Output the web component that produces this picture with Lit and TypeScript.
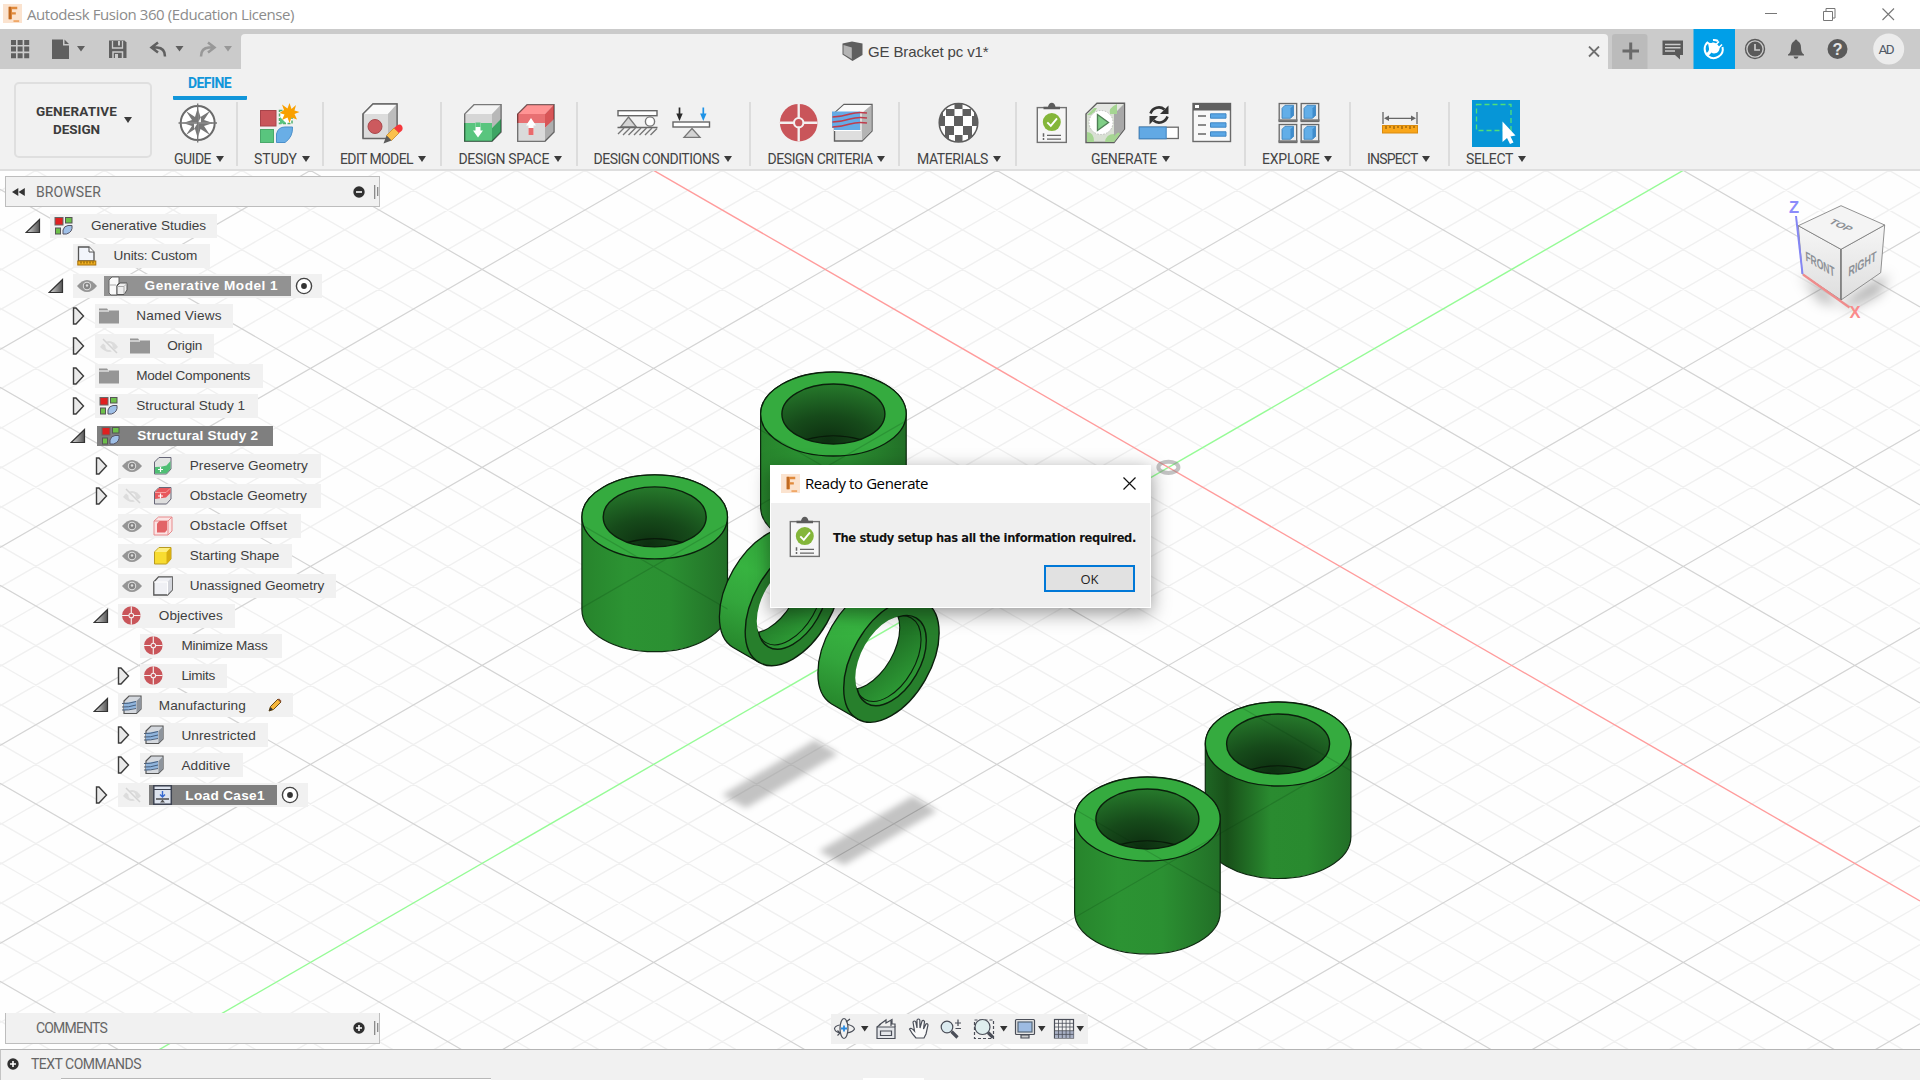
import { LitElement, html, svg, css, nothing } from "lit";
import { customElement, property, query } from "lit/decorators.js";

/* Text set to a fixed measure by tracking, so labels keep their column width. */
@customElement("fit-text")
class FitText extends LitElement {
  static styles = css`
    :host { display: inline-block; white-space: nowrap; flex: none; }
  `;
  @property() text = "";
  @property({ type: Number }) w = 0;
  @query(".t") span!: HTMLElement;
  updated() {
    const s = this.span;
    s.style.letterSpacing = "0px";
    const natural = s.getBoundingClientRect().width;
    s.style.letterSpacing = (this.w - natural) / this.text.length + "px";
    this.style.width = this.w + "px";
  }
  render() {
    return html`<span class="t">${this.text}</span>`;
  }
}

const fit = (text: string, w: number, cls = "") =>
  html`<fit-text class=${cls} .text=${text} .w=${w}></fit-text>`;

/* An svg whose user units are window pixels, starting at x, y. */
const S = (x: number, y: number, w: number, h: number, c: unknown) =>
  html`<svg width=${w} height=${h} viewBox="${x} ${y} ${w} ${h}">${c}</svg>`;

const tri = (fill = "#3c3c3c", w = 8) =>
  html`<svg class="caret" width=${w} height="6" viewBox="0 0 8 6"><path d="M0 0H8L4 6Z" fill=${fill} /></svg>`;

const logo = html`<svg width="19" height="19" viewBox="0 0 20 20">
  <rect width="20" height="20" fill="#fbe3cf" />
  <path d="M6 3H15V5.500H9.500V8.600H13.500V11H9.500V16H6Z" fill="#e08a3c" />
  <path d="M6 3H8.500V16H6Z" fill="#c06a22" /><path d="M11 17H17V19H11Z" fill="#f0a868" />
</svg>`;

/* ---------- ribbon icons ---------- */
const compass = S(177, 102, 42, 42, svg`
  <circle cx="197.7" cy="123" r="17" fill="#fff" stroke="#6a6a6a" stroke-width="2"/>
  <path d="M186 111L195 117L197.7 108L200.5 117L210 111L204 120L213 123L204 126L210 135L200.5 129L197.7 138L195 129L186 135L192 126L183 123L192 120Z" fill="#777"/>
  <path d="M197.7 110V136M184 123H211" stroke="#fff" stroke-width="1"/>
  <path d="M197.7 123L201 117V123ZM197.7 123L194 129V123Z" fill="#f4f4f4"/>
  <path d="M197.7 103.500V142.500M178.500 123H217" stroke="#777" stroke-width="1.400"/>`);
const study = S(259, 102, 42, 42, svg`
  <rect x="260.500" y="110.500" width="15.500" height="15.500" fill="#c9555a" stroke="#a8444a"/>
  <rect x="279.500" y="110.500" width="12.500" height="13" fill="#fff" stroke="#4fae6c" stroke-width="1.500" stroke-dasharray="3 1.500"/>
  <path d="M280 124V117L286 123Z" fill="#59c57e"/>
  <rect x="260.500" y="129.500" width="13" height="13" fill="#59c57e" stroke="#49a86a"/>
  <path d="M276.500 142.500V134Q278 127 285 127H292.500Q293 137 285 142.500Z" fill="#69aee6" stroke="#4b8fca"/>
  <path d="M289.500 103L291.500 109L296 105L294.500 110.500L299.500 112L294.500 114L297 119.500L291.500 117.500L289.500 123L287.500 117.500L282 120L284.500 114.500L279.500 113L284 110L282 104.500L287.500 108.500Z" fill="#f9a000" />`);
const editModel = S(361, 101, 43, 43, svg`
  <path d="M363 113L373 103H397V127L387 137.500H363Z" fill="#dcdcdc" stroke="#686868" stroke-width="1.300"/>
  <path d="M363 113L373 103H397L388 113Z" fill="#fafafa"/><path d="M388 113L397 103V127L388 137Z" fill="#bdbdbd"/>
  <path d="M363 137.500V113L373 103H397V127" fill="none" stroke="#686868" stroke-width="1.300"/>
  <circle cx="375" cy="125.500" r="7" fill="#cc5a5e" stroke="#a8484c"/>
  <path d="M386.500 134.500L394 127L399 132L391.500 139.500Z" fill="#fbc04c" stroke="#c98a28" stroke-width=".8"/>
  <path d="M386.500 134.500L383.500 142.500L391.500 139.500Z" fill="#5a5a5a"/>
  <path d="M394 127L397 124.500Q400 122.500 402 125Q403.500 128 401.500 130L399 132Z" fill="#f5383c"/>`);
const spaceIcon = (x: number, top: string, topHi: string, side: string, bot: string, botSide: string, up: boolean) =>
  S(x - 1, 103, 41, 41, svg`
  <path d="M${x} 114V123.500H${x + 28}V114Z" fill=${top}/><path d="M${x} 126V141.500H${x + 28}V123H${x}Z" fill=${bot}/>
  <path d="M${x} 114L${x + 10} 104.500H${x + 37}L${x + 28} 114Z" fill=${topHi}/>
  <path d="M${x + 28} 114L${x + 37} 104.500V120L${x + 28} 128Z" fill=${side}/>
  <path d="M${x + 28} 128L${x + 37} 119V132L${x + 28} 141.500Z" fill=${botSide}/>
  <path d="M${x + .7} 141.300V114L${x + 10} 104.700H${x + 37.200}V132L${x + 28} 141.300Z" fill="none" stroke="#00000080" stroke-width="1.300"/>
  ${up
    ? svg`<path d="M${x + 14} 118L${x + 19} 125.500H${x + 16.500}V135H${x + 11.500}V125.500H${x + 9}Z" fill="#fff"/><path d="M${x + 11.500} 128H${x + 16.500}V135H${x + 11.500}Z" fill="#e96a6c"/>`
    : svg`<path d="M${x + 14} 137.500L${x + 9} 130.500H${x + 11.500}V123H${x + 16.500}V130.500H${x + 19}Z" fill="#fff"/><path d="M${x + 11.500} 122.500H${x + 16.500}V127H${x + 11.500}Z" fill="#59c57e"/>`}`);
const support = S(616, 103, 43, 40, svg`
  <rect x="618" y="110.700" width="39" height="5" fill="#fff" stroke="#666" stroke-width="1.400"/>
  <path d="M628.500 117L636.500 127H620.500Z" fill="#d4d4d4" stroke="#777" stroke-width="1.300"/>
  <circle cx="650" cy="121.500" r="4.600" fill="#fff" stroke="#777" stroke-width="1.400"/>
  <path d="M617.500 127.500H657.500" stroke="#666" stroke-width="1.300"/>
  <path d="M618 134L624 128M623 135L630 128M628.500 135L635.500 128M634 135L641 128M639.500 135L646.500 128M645 135L652 128M650.500 135L657 128.500" stroke="#777" stroke-width="1.400"/>`);
const load = S(671, 103, 40, 40, svg`
  <rect x="673" y="122" width="36.500" height="5" fill="#fff" stroke="#666" stroke-width="1.400"/>
  <path d="M692 128.500L700 137.300H684Z" fill="#d4d4d4" stroke="#777" stroke-width="1.300"/>
  <path d="M679.500 107.500V115" stroke="#2a2a2a" stroke-width="1.700"/><path d="M676.300 113.500H682.700L679.500 121Z" fill="#2a2a2a"/>
  <path d="M703.300 107.500V115" stroke="#1f93e6" stroke-width="1.700"/><path d="M700.100 113.500H706.500L703.300 121Z" fill="#1f93e6"/>`);
const target = (cx: number, cy: number, r: number) => svg`
  <circle cx=${cx} cy=${cy} r=${r} fill="#c9555a"/>
  <path d="M${cx} ${cy - r}V${cy + r}M${cx - r} ${cy}H${cx + r}" stroke="#f4f0f0" stroke-width=${r / 8}/>
  <circle cx=${cx} cy=${cy} r=${r * .25} fill="#c9555a" stroke="#f4f0f0" stroke-width=${r / 9}/>`;
const criteria = S(779, 103, 40, 41, target(798.7, 122.7, 18.8));
const layers = S(832, 103, 42, 41, svg`
  <path d="M834.500 113L844 104.500H872V131L862 141H834.500Z" fill="#dedede" stroke="#606060" stroke-width="1.400"/>
  <path d="M835 113L844 105H871.500L862 113Z" fill="#fafafa"/><path d="M862 113L871.500 105V131L862 140.500Z" fill="#b4b4b4"/>
  <path d="M832 111.500H860V130.500H834V128H832Z" fill="#65abe6"/><path d="M834 130.500H861" stroke="#fff"/>
  <path d="M832.500 117Q842 116.500 850 114T867 113M832.500 122Q842 121.500 850 119T867 118M832.500 127Q842 126.500 850 124T867 123" fill="none" stroke="#c03c4c" stroke-width="1.400"/>`);
const sphere = S(938, 102, 41, 42, svg`
  <clipPath id="sph"><circle cx="958.500" cy="122.800" r="19.300"/></clipPath>
  <circle cx="958.500" cy="122.800" r="19.300" fill="#fff" stroke="#5c5c5c" stroke-width="1.500"/>
  <g clip-path="url(#sph)" fill="#5f5f5f">
    <path d="M954.500 102H962.500V109H954.500ZM946 109H954.500V116H946ZM962.500 109H971V116H962.500ZM939 116H945V126H939ZM954 116H963V126H954ZM972 116H978V126H972ZM945 126H954V135H945ZM963 126H972V135H963ZM955 135H962.500V143H955ZM940 109H943V116H940ZM974 109H977V116H974ZM944 135H949V143H944ZM968 135H973V143H968Z"/>
  </g>`);
const clip = (x: number, y: number) => svg`
  <g transform="translate(${x} ${y})">
    <rect x=".8" y="4.800" width="29" height="34.800" fill="#f6f6f6" stroke="#727272" stroke-width="1.400"/>
    <path d="M7 6.500V4H11.500Q12.500 0 15.300 0T19 4H23.500V6.500Z" fill="#5c5c5c"/>
    <circle cx="15.300" cy="19.300" r="9" fill="#84b63a"/>
    <path d="M10.800 19.500L14.300 23L20.500 15.500" fill="none" stroke="#fff" stroke-width="1.900"/>
    <path d="M10.500 32.500H24.500M10.500 36.300H24.500" stroke="#666" stroke-width="1.300"/>
    <path d="M7 30.500V34M7 35.300V37.300" stroke="#666" stroke-width="1.500"/>
  </g>`;
const genCube = S(1080, 102, 46, 42, svg`
  <path d="M1086 114L1097 103.300H1124.500V129L1114 142.500H1086Z" fill="#d9e0d4" stroke="#5f5f5f" stroke-width="1.400"/>
  <path d="M1114 114L1124 104V129L1114 142Z" fill="#a8a8a8"/><path d="M1087 114L1097.500 104H1123L1114 114Z" fill="#e4e6e2"/>
  <path d="M1087 132Q1094 132 1094 142H1087ZM1114 134Q1106 134 1105 142H1114ZM1087 115Q1093 116 1097 108L1094 108ZM1117 104Q1108 108 1110 114H1117ZM1114 136Q1119 130 1120 134L1114 142Z" fill="#a5d592"/>
  <circle cx="1101" cy="122.500" r="12" fill="#fff" stroke="#bbb" stroke-dasharray="1.500 1.500"/>
  <path d="M1097.500 114.500V130.500L1108.500 122.500Z" fill="#7fcf86" stroke="#4f7f55" stroke-width="1.400"/>`);
const sync = S(1138, 103, 42, 40, svg`
  <path d="M1150.500 113.500A8.800 8.800 0 0 1 1164.500 109.500" fill="none" stroke="#333" stroke-width="2.600"/><path d="M1168.500 105.500V114H1160Z" fill="#333"/>
  <path d="M1167.500 116.500A8.800 8.800 0 0 1 1153.500 120.500" fill="none" stroke="#333" stroke-width="2.600"/><path d="M1149.500 124.500V116H1158Z" fill="#333"/>
  <rect x="1139.500" y="127.200" width="38.800" height="11.300" fill="#fff" stroke="#6a6a6a" stroke-width="1.300"/>
  <rect x="1139.200" y="127" width="27" height="11.800" fill="#62a9e4" stroke="#3e83c0"/>`);
const list = S(1192, 102, 40, 42, svg`
  <rect x="1193" y="103.500" width="37.500" height="38" fill="#f8f8f8" stroke="#6a6a6a" stroke-width="1.400"/>
  <rect x="1193" y="103" width="38" height="7.500" fill="#606060"/><rect x="1195" y="105" width="4" height="3" fill="#fff"/>
  <path d="M1198 116H1206M1198 125H1206M1198 134H1206" stroke="#666" stroke-width="1.500"/>
  <path d="M1210.500 113.800H1226V118.200H1210.500ZM1210.500 122.800H1226V127.200H1210.500ZM1210.500 131.800H1226V136.200H1210.500Z" fill="#5aa7e6" stroke="#4187c4"/>`);
const quad = (x: number, y: number) => svg`<g transform="translate(${x} ${y})">
  <rect x=".7" y=".7" width="17.500" height="18" fill="#ececec" stroke="#686868" stroke-width="1.300"/><path d="M0 17.500H19" stroke="#777" stroke-width="2"/>
  <path d="M3.500 5.500L6.500 2.500H15V12.500L12 15.500H3.500Z" fill="#62aee8" stroke="#3b7fb8" stroke-width=".8"/><path d="M12 5.500L15 2.500V12.500L12 15.500Z" fill="#3f8ccc"/></g>`;
const explore = S(1278, 102, 42, 42, svg`${quad(1278.5, 102.8)}${quad(1300.5, 102.8)}${quad(1278.5, 123.8)}${quad(1300.5, 123.8)}`);
const ruler = S(1381, 103, 38, 40, svg`
  <path d="M1383 112V124M1417 112V124M1386 118.300H1414" stroke="#666" stroke-width="1.300"/>
  <path d="M1384 118.300L1389 115.500V121ZM1416 118.300L1411 115.500V121Z" fill="#666"/>
  <rect x="1382.500" y="125.500" width="35" height="7.500" fill="#f9a61a" stroke="#d98b10"/>
  <path d="M1386 126V129M1390 126V128M1394 126V129M1398 126V128M1402 126V129M1406 126V128M1410 126V129M1414 126V128" stroke="#7a4d05"/>`);
const select = S(1472, 99, 48, 47, svg`
  <rect x="1472" y="99" width="48" height="47" fill="#0696d7"/>
  <path d="M1476.500 103.500H1511V129.500H1476.500Z" fill="none" stroke="#4fe07a" stroke-width="1.300" stroke-dasharray="5 3"/>
  <path d="M1502.500 120.500V141L1507 137L1510 143L1513.500 141.500L1510.500 135.500L1515.500 134.500Z" fill="#fff"/>`);

/* x0/x1: separator-to-separator span; lx/lw: label start and measure; ix: icon row start */
interface Group { x0: number; x1: number; label: string; lx: number; lw: number; ix: number; gap: number; icons: unknown[] }
const groups: Group[] = [
  { x0: 160, x1: 237, label: "GUIDE", lx: 174, lw: 37, ix: 177, gap: 0, icons: [compass] },
  { x0: 237, x1: 323, label: "STUDY", lx: 254, lw: 43, ix: 259, gap: 0, icons: [study] },
  { x0: 323, x1: 441, label: "EDIT MODEL", lx: 340, lw: 73, ix: 361, gap: 0, icons: [editModel] },
  { x0: 441, x1: 577, label: "DESIGN SPACE", lx: 458.5, lw: 90.5, ix: 463, gap: 12, icons: [
    spaceIcon(464, "#d6d6d6", "#f4f4f4", "#b8b8b8", "#59c57e", "#3ea564", false),
    spaceIcon(517, "#e87072", "#ff9494", "#d85557", "#dadada", "#aeaeae", true)] },
  { x0: 577, x1: 750, label: "DESIGN CONDITIONS", lx: 593.5, lw: 125.5, ix: 616, gap: 12, icons: [support, load] },
  { x0: 750, x1: 899, label: "DESIGN CRITERIA", lx: 767.5, lw: 105, ix: 779, gap: 13, icons: [criteria, layers] },
  { x0: 899, x1: 1016, label: "MATERIALS", lx: 917, lw: 71, ix: 938, gap: 0, icons: [sphere] },
  { x0: 1016, x1: 1245, label: "GENERATE", lx: 1091, lw: 66, ix: 1036, gap: 12, icons: [S(1036, 102, 32, 42, clip(1036.5, 102.8)), genCube, sync, list] },
  { x0: 1245, x1: 1350, label: "EXPLORE", lx: 1262, lw: 57.5, ix: 1278, gap: 0, icons: [explore] },
  { x0: 1350, x1: 1449, label: "INSPECT", lx: 1367, lw: 50.5, ix: 1381, gap: 0, icons: [ruler] },
  { x0: 1449, x1: 1549, label: "SELECT", lx: 1466, lw: 47, ix: 1472, gap: 0, icons: [select] },
];

/* ---------- tree icons, 20 x 20 ---------- */
const ic = (c: unknown) => html`<svg width="20" height="20" viewBox="0 0 20 20">${c}</svg>`;
const T: Record<string, unknown> = {
  study: ic(svg`<rect x="1" y="1.500" width="8" height="7.500" fill="#e02020" stroke="#666"/><rect x="11.500" y="1.500" width="6.500" height="5.500" fill="#6cc04a" stroke="#555"/>
    <rect x="1.500" y="12" width="5" height="6" fill="#6cc04a" stroke="#555"/><path d="M9 18V14Q10 10 14 9.500H18Q19 16 12.500 18Z" fill="#9fc0e8" stroke="#556"/>`),
  units: ic(svg`<path d="M1.500 15V1H12L17 6V15Z" fill="#f2f5fb" stroke="#555" stroke-width="1.300"/><path d="M12 1V6H17" fill="#fff" stroke="#555"/><rect x=".8" y="15" width="18" height="4" fill="#f0b020" stroke="#a87008"/><path d="M4 15.500V17.500M7 15.500V17.500M10 15.500V17.500M13 15.500V17.500M16 15.500V17.500" stroke="#7a5000"/>`),
  model: ic(svg`<path d="M1 4L4 1H11V7L9 9V19H3L1 17Z" fill="#fafafa" stroke="#666"/><path d="M9 10L12 7H19V14L16 18.500H9Z" fill="#eee" stroke="#555"/><path d="M1 9H8M9 10.500H16V18M16 10.500L19 7.500" fill="none" stroke="#aaa"/>`),
  folder: ic(svg`<path d="M0 2.500H8L9.500 4.500H20V17.500H0Z" fill="#969696"/><path d="M0 5H10" stroke="#f1f1f1" stroke-width="1.200"/>`),
  eye: ic(svg`<path d="M0 10Q5 4 10 4T20 10Q15 16 10 16T0 10Z" fill="#959595"/><circle cx="10" cy="10" r="4.200" fill="#e0e0e0"/><circle cx="10" cy="10" r="3.200" fill="#858585"/><circle cx="10" cy="9.500" r="1.200" fill="#ddd"/>`),
  eyeoff: ic(svg`<path d="M1 11Q5 5 10 5T19 11Q14 16 10 16T1 11Z" fill="#dcdcdc"/><circle cx="10" cy="10.500" r="3.500" fill="#f1f1f1"/><path d="M2 3L18 18" stroke="#f1f1f1" stroke-width="3.500"/><path d="M4 3L18 17" stroke="#d4d4d4" stroke-width="1.500"/>`),
  preserve: ic(svg`<path d="M1.500 6L6 1.500H18V13L13.500 18H1.500Z" fill="#e2e4e2" stroke="#667"/><path d="M2 11Q8 11 13.500 9.500L17.500 5V13L13.300 17.500H2Z" fill="#4fbf74"/><path d="M7.500 11V16M5 13.500H10" stroke="#fff" stroke-width="1.200"/>`),
  obstacle: ic(svg`<path d="M1.500 6L6 1.500H18V13L13.500 18H1.500Z" fill="#dedede" stroke="#667"/><path d="M2 6L6 2H17.500V7L13 11.500L2 13Z" fill="#e8585c"/><path d="M2 6.500H13L17 2.500" fill="none" stroke="#f8a0a0"/><path d="M7.500 7.500V12.500M5 10H10" stroke="#fff" stroke-width="1.200"/>`),
  offset: ic(svg`<path d="M1 5L5.500 1H19V15L15 19H1Z" fill="#fbe4e4" stroke="#e88a8c"/><path d="M1 5H15V19M15 5L19 1" fill="none" stroke="#e88a8c"/><path d="M4 7.500L6.500 5H14V14L12 16.500H4Z" fill="#e26366"/>`),
  start: ic(svg`<path d="M1.500 6L6 1.500H18V13L13.500 18H1.500Z" fill="#f8dc30" stroke="#b89a20"/><path d="M13.500 6L18 1.500V13L13.500 18Z" fill="#d8ae10"/><path d="M2 6L6 2H17L13.500 6Z" fill="#fdee80"/>`),
  unassigned: ic(svg`<path d="M.8 6L5.500 .8H19.200V14L14.500 19H.8Z" fill="#eff0f4" stroke="#555" stroke-width="1.300"/><path d="M14.500 6L19 1V14L14.500 18.500Z" fill="#d4d6dc"/><path d="M1 6H14.500V18.500" fill="none" stroke="#fff"/>`),
  target: ic(target(9.3, 9.5, 9.3)),
  manu: ic(svg`<path d="M2 6L7 1H19V14L14.500 18.500H2Z" fill="#d4d8de" stroke="#555" stroke-width="1.200"/><path d="M14.500 6L19 1.500V14L14.500 18Z" fill="#8e949c"/><path d="M2 8L14 6V13L2 15.500Z" fill="#8fb4dc"/><path d="M0 8.500Q6 9 14 6.500M0 12Q6 12.500 14 10M0 15Q6 15.500 14 13.500" fill="none" stroke="#3d5370" stroke-width=".9"/>`),
  loadcase: ic(svg`<rect x=".8" y=".8" width="17.500" height="18.400" fill="#dde3ee" stroke="#3c4250" stroke-width="1.500"/><path d="M1 4.500H18" stroke="#3c4250"/><path d="M9.500 6V12M7 9.500L9.500 12L12 9.500" fill="none" stroke="#3468d0" stroke-width="1.400"/><path d="M3 14H16" stroke="#333" stroke-width="1.300"/><path d="M9.500 14.500L12 17.500H7Z" fill="#555"/>`),
};
const radio = html`<svg class="radio" width="18" height="18" viewBox="0 0 18 18"><circle cx="9" cy="9" r="7.600" fill="#fff" stroke="#444" stroke-width="1.400"/><circle cx="9" cy="9" r="2.900" fill="#333"/></svg>`;
const pencil = html`<svg class="pencil" width="14" height="14" viewBox="0 0 14 14"><path d="M1 13L2.500 8.500L10 1L13 4L5.500 11.500Z" fill="#f6b73c" stroke="#6b4a12"/><path d="M1 13L2.500 9L5 11.500Z" fill="#333"/><path d="M9.500 1.500L11 .5L13.500 3L12.500 4.500Z" fill="#8a5030"/></svg>`;

interface Row { lv: number; t?: "open" | "closed"; eye?: "eye" | "eyeoff"; icon: string; text: string; w: number; pad?: number; dark?: "mid" | "deep"; radio?: boolean; pencil?: boolean; bare?: boolean }
const rows: Row[] = [
  { lv: 0, t: "open", icon: "study", text: "Generative Studies", w: 115, pad: 11 },
  { lv: 1, icon: "units", text: "Units: Custom", w: 83.5 },
  { lv: 1, t: "open", eye: "eye", icon: "model", text: "Generative Model 1", w: 133.5, dark: "mid", radio: true, pad: 13 },
  { lv: 2, t: "closed", icon: "folder", text: "Named Views", w: 85.5, pad: 11 },
  { lv: 2, t: "closed", eye: "eyeoff", icon: "folder", text: "Origin", w: 35, pad: 11.5 },
  { lv: 2, t: "closed", icon: "folder", text: "Model Components", w: 114 },
  { lv: 2, t: "closed", icon: "study", text: "Structural Study 1", w: 109, pad: 12.5 },
  { lv: 2, t: "open", icon: "study", text: "Structural Study 2", w: 121, dark: "deep", bare: true, pad: 14.5 },
  { lv: 3, t: "closed", eye: "eye", icon: "preserve", text: "Preserve Geometry", w: 118, pad: 13.5 },
  { lv: 3, t: "closed", eye: "eyeoff", icon: "obstacle", text: "Obstacle Geometry", w: 117, pad: 14.5 },
  { lv: 3, eye: "eye", icon: "offset", text: "Obstacle Offset", w: 97.5, pad: 14 },
  { lv: 3, eye: "eye", icon: "start", text: "Starting Shape", w: 89.5 },
  { lv: 3, eye: "eye", icon: "unassigned", text: "Unassigned Geometry", w: 134.5, pad: 12 },
  { lv: 3, t: "open", icon: "target", text: "Objectives", w: 64 },
  { lv: 4, icon: "target", text: "Minimize Mass", w: 86, pad: 15 },
  { lv: 4, t: "closed", icon: "target", text: "Limits", w: 33.5 },
  { lv: 3, t: "open", icon: "manu", text: "Manufacturing", w: 87, pencil: true, pad: 11 },
  { lv: 4, t: "closed", icon: "manu", text: "Unrestricted", w: 74.5, pad: 12 },
  { lv: 4, t: "closed", icon: "manu", text: "Additive", w: 49 },
  { lv: 3, t: "closed", eye: "eyeoff", icon: "loadcase", text: "Load Case1", w: 79.5, dark: "deep", radio: true, pad: 12 },
];
const openT = html`<svg class="tog open" width="16" height="16" viewBox="0 0 16 16"><defs><linearGradient id="g"><stop offset="0" stop-color="#ddd"/><stop offset="1" stop-color="#555"/></linearGradient></defs><path d="M1.200 14.500H14.500V1.500Z" fill="url(#g)" stroke="#333" stroke-width="1.200"/></svg>`;
const closedT = html`<svg class="tog" width="16" height="18" viewBox="1.500 0 16 18"><path d="M3 1H5.500L13 9L5.500 17H3Z" fill="#e9e9e9" stroke="#3c3c3c" stroke-width="1.400"/></svg>`;

/* ---------- viewport scene ---------- */
const OX = 1168.4, OY = 467.4, DX = 171.6, DY = 99;
const m = DY / DX;
const gridLines = (major: boolean) => {
  const out: string[] = [];
  for (let k = -46; k <= 46; k++) {
    if ((k % 5 === 0) !== major || k === 0) continue;
    const c = (k * 2 * DY) / 5;
    const f = (s: number, x: number) => OY + s * m * (x - OX) + c;
    for (const s of [1, -1]) out.push(`M0 ${f(s, 0).toFixed(1)}L1920 ${f(s, 1920).toFixed(1)}`);
  }
  return out.join("");
};
const MAJOR = gridLines(true), MINOR = gridLines(false);
const RX = 72.8, RY = 42;
const cylPath = (cx: number, cy: number, h: number) =>
  `M${cx - RX} ${cy}A${RX} ${RY} 0 0 1 ${cx + RX} ${cy}V${cy + h}A${RX} ${RY} 0 0 1 ${cx - RX} ${cy + h}Z`;
const cyl = (cx: number, cy: number, h: number, shade = false) => svg`
  <path d=${cylPath(cx, cy, h)} fill=${shade ? "url(#bodyShade)" : "url(#body)"} stroke="#0e2a10" stroke-width="1.200"/>
  <ellipse cx=${cx} cy=${cy} rx=${RX} ry=${RY} fill="#35ab3f" stroke="#0b200c" stroke-width="1.300"/>
  <ellipse cx=${cx} cy=${cy} rx="51.500" ry="30" fill="url(#bore)" stroke="#0b200c" stroke-width="1.400"/>
  <path d="M${cx - 27} ${cy + 25.500}Q${cx} ${cy + 18} ${cx + 27} ${cy + 25.500}" fill="none" stroke="#081a09" stroke-width="1.200"/>`;

/* A ring standing in the YZ plane; its axis runs along screen X. */
const E = (cx: number, cy: number, r: number) =>
  svg`<ellipse cx=${cx} cy=${cy} rx=${r} ry=${r * .577} transform="rotate(-60 ${cx} ${cy})"/>`;
const ring = (id: string, cx: number, cy: number) => {
  const R = 67.5, r = 49.4, bx = cx - 26, by = cy - 15;
  const nx = .5 * R, ny = .866 * R;
  return svg`
  <clipPath id="${id}f">${E(cx, cy, r)}</clipPath>
  <clipPath id="${id}b">${E(cx - 3, cy - 2, r - 2.5)}</clipPath>
  <mask id="${id}m"><rect x="600" y="400" width="500" height="400" fill="#fff"/>
    <g clip-path="url(#${id}b)"><g fill="#000">${E(bx + 1, by + 1, r - 3)}</g></g></mask>
  <g mask="url(#${id}m)">
    <path d="M${cx - nx} ${cy + ny}L${bx - nx} ${by + ny}A${R} ${R * .577} -60 0 1 ${bx + nx} ${by - ny}L${cx + nx} ${cy - ny}Z" fill="url(#rim)" stroke="#0b200c" stroke-width="1.300"/>
    <g fill="#277f2c" stroke="#0b200c" stroke-width="1.400">${E(cx, cy, R)}</g>
    <g fill="url(#inner)" stroke="#0b200c" stroke-width="1.400">${E(cx, cy, r)}</g>
    <g fill="none" stroke="#0b200c" stroke-width="1.100" clip-path="url(#${id}f)">${E(cx - 3.5, cy - 2, r - 2.5)}</g>
    <g clip-path="url(#${id}b)"><g fill="none" stroke="#0b200c" stroke-width="2.200">${E(bx + 1, by + 1, r - 3)}</g></g>
  </g>`;
};

const scene = html`<svg class="scene" width="1920" height="878" viewBox="0 171 1920 878">
  <defs>
    <linearGradient id="body"><stop offset="0" stop-color="#27842c"/><stop offset=".3" stop-color="#2c9333"/><stop offset=".6" stop-color="#2b9032"/><stop offset="1" stop-color="#226f27"/></linearGradient>
    <linearGradient id="bodyShade"><stop offset="0" stop-color="#1f6624"/><stop offset=".15" stop-color="#185019"/><stop offset=".45" stop-color="#2a8b30"/><stop offset=".7" stop-color="#298a2f"/><stop offset="1" stop-color="#226f27"/></linearGradient>
    <radialGradient id="bore" cx=".45" cy=".95" r=".95"><stop offset="0" stop-color="#0d2e10"/><stop offset=".45" stop-color="#164a1a"/><stop offset="1" stop-color="#26792b"/></radialGradient>
    <linearGradient id="rim" x1=".7" y1="0" x2=".4" y2="1"><stop offset="0" stop-color="#30a038"/><stop offset=".4" stop-color="#37b340"/><stop offset=".65" stop-color="#33a63c"/><stop offset="1" stop-color="#26852b"/></linearGradient>
    <linearGradient id="inner" x1="1" y1="0" x2=".3" y2="1"><stop offset="0" stop-color="#1c6621"/><stop offset=".4" stop-color="#207326"/><stop offset="1" stop-color="#2f9e37"/></linearGradient>
    <filter id="soft" x="-20%" y="-20%" width="140%" height="140%"><feGaussianBlur stdDeviation="3"/></filter>
    <filter id="soft2" x="-50%" y="-50%" width="200%" height="200%"><feGaussianBlur stdDeviation="7"/></filter>
    <clipPath id="bodies"><path d="${cylPath(654.7, 516.9, 92.8)}${cylPath(833.4, 414, 93)}${cylPath(1147.4, 819, 93)}${cylPath(1278.1, 744, 92.5)}"/></clipPath>
    <linearGradient id="cf" x2="0" y2="1"><stop offset="0" stop-color="#f6f6f6"/><stop offset="1" stop-color="#dedede"/></linearGradient>
  </defs>
  <rect y="171" width="1920" height="878" fill="#fefefe"/>
  <path d=${MINOR} stroke="#f0f0f0" stroke-width="1.400" fill="none"/>
  <path d=${MAJOR} stroke="#d4d4d4" stroke-width="1.200" fill="none"/>
  <path d="M0 ${OY + OX * m}L1920 ${OY - (1920 - OX) * m}" stroke="#96fb96" stroke-width="1.400"/>
  <path d="M0 ${OY - OX * m}L1920 ${OY + (1920 - OX) * m}" stroke="#ff9c9c" stroke-width="1.400"/>
  <ellipse cx="1168.400" cy="467.300" rx="10" ry="5.600" fill="none" stroke="#888" stroke-opacity=".5" stroke-width="4"/>
  <g filter="url(#soft)" fill="#000" fill-opacity=".23">
    <path d="M722 795L746 808L838 754L815 740Z"/><path d="M819 851L844 865L937 811L913 796Z"/>
  </g>
  ${cyl(833.4, 414, 93)}${cyl(654.7, 516.9, 92.8)}
  ${ring("ra", 792.9, 604)}${ring("rb", 891.4, 660.6)}
  ${cyl(1278.1, 744, 92.5, true)}${cyl(1147.4, 819, 93)}
  <path d=${MAJOR} stroke="#00300a" stroke-opacity=".18" stroke-width="1.200" fill="none" clip-path="url(#bodies)"/>
  <g class="cube">
    <path d="M1800 272L1841 305L1888 275L1878 292L1850 306L1822 300Z" fill="#000" fill-opacity=".5" filter="url(#soft2)"/>
    <path d="M1798.300 225.700L1841 249.300V300L1802.300 274Z" fill="url(#cf)" stroke="#777" stroke-width=".8"/>
    <path d="M1884.700 225L1841 249.300V300L1880.700 272.700Z" fill="url(#cf)" stroke="#777" stroke-width=".8"/>
    <path d="M1841 205.700L1798.300 225.700L1841 249.300L1884.700 225Z" fill="#f4f4f4" stroke="#777" stroke-width=".8"/>
    <path d="M1841 249.300V300" stroke="#666"/>
    <path d="M1796 216L1802.500 274" stroke="#8486f4" stroke-width="2"/>
    <path d="M1803 274.500L1849.500 307.500" stroke="#ef8c8c" stroke-width="2.200"/>
    <text class="ax" x="1789" y="213" fill="#8b8bfa">Z</text><text class="ax" x="1849.500" y="318" fill="#fa8b8b">X</text>
    <text class="face" transform="matrix(.8 .36 -.66 .48 1841.5 225)" y="5">TOP</text>
    <text class="face" transform="matrix(.68 .39 .06 1.1 1820 263.3)" y="5">FRONT</text>
    <text class="face" transform="matrix(.72 -.42 -.04 1.1 1862.5 263)" y="5">RIGHT</text>
  </g>
</svg>`;

const circ = (plus: boolean) => html`<svg width="12" height="12" viewBox="0 0 12 12"><circle cx="6" cy="6" r="5.700" fill="#303030"/><path d=${plus ? "M3 6H9M6 3V9" : "M3 6H9"} stroke="#fff" stroke-width="1.600"/></svg>`;
const bars = html`<svg width="5" height="14" viewBox="0 0 5 14"><path d="M.7 0V14M3.700 2V11" stroke="#808080" stroke-width="1.200"/></svg>`;

@customElement("app-root")
class AppRoot extends LitElement {
  static styles = css`
    :host { display: flex; flex-direction: column; width: 1920px; height: 1080px; overflow: hidden; background: #f1f1f1;
      font-family: "Liberation Sans", Arial, sans-serif; color: #3c3c3c; }
    * { box-sizing: border-box; }
    svg { display: block; flex: none; }
    .title { height: 29px; background: #fff; display: flex; align-items: center; padding: 0 0 2px 3px; flex: none; }
    .title .name { font: 15px "Open Sans", sans-serif; color: #8c8c8c; margin-left: 5px; flex: 1; }
    .tabs { height: 40px; background: #cbcbcb; display: flex; flex: none; }
    .quick { width: 241px; }
    .tab { width: 1367px; margin-top: 5px; background: #f1f1f1; border-radius: 4px 4px 0 0; display: flex; align-items: center; padding: 0 8px 0 601px; }
    .tab .name { font-size: 15px; color: #454545; margin: 0 0 1px 5px; }
    .tab .x { margin-left: auto; }
    .tools { width: 312px; }
    .ribbon { height: 102px; display: flex; flex: none; border-bottom: 2px solid #dedede; }
    .ws { margin: 13px 0 0 14px; width: 138px; height: 76px; border: 2px solid #dfdfdf; border-radius: 5px; display: flex; align-items: center; padding-left: 20px; gap: 7px; flex: none; }
    .ws .txt { display: flex; flex-direction: column; align-items: center; font: bold 13.500px/18px Roboto, sans-serif; width: 81px; }
    .panel { display: flex; flex-direction: column; margin-left: 8px; flex: none; }
    .define { width: 74px; height: 31px; margin-left: 13px; border-bottom: 4px solid #1296da; border-radius: 1px; color: #1296da; font: bold 14px/29px Roboto, sans-serif; padding-left: 15px; flex: none; }
    .groups { display: flex; height: 70px; flex: none; }
    .group { display: flex; flex-direction: column; flex: none; height: 70px; position: relative; }
    .group + .group::before { content: ""; position: absolute; left: -1px; top: 2px; width: 2px; height: 64px; background: #dcdcdc; }
    .icons { display: flex; align-items: center; height: 46px; flex: none; }
    .label { display: flex; align-items: center; gap: 4.500px; font: 14px/18px Roboto, sans-serif; color: #444; height: 24px; padding-top: 1px; flex: none; }
    .view { flex: 1; position: relative; overflow: hidden; min-height: 0; }
    .scene { position: absolute; inset: 0; }
    .face { font: bold 12.500px "Liberation Sans", sans-serif; fill: #8c9096; text-anchor: middle; }
    .ax { font: bold 16.500px "Liberation Sans", sans-serif; }
    .side { position: absolute; left: 0; top: 0; bottom: 5px; width: 400px; display: flex; flex-direction: column; }
    .bar { margin-left: 5px; width: 375px; height: 31px; background: #f1f1f1; border: 1.500px solid #bdbdbd; display: flex; align-items: center; font: 14px Roboto, sans-serif; color: #666; flex: none; }
    .bar.top { margin-top: 5px; padding-left: 6px; }
    .bar.foot { margin-top: auto; padding-left: 30px; border-top: none; }
    .bar .end { margin-left: auto; display: flex; align-items: center; gap: 9px; }
    .top .name { margin-left: 11px; }
    .tree { margin-top: 4px; }
    .row { height: 29.970px; display: flex; align-items: center; font-size: 13.600px; color: #3f3f3f; }
    .tog { margin-right: 7px; }
    .tog.open { margin-right: 9px; margin-left: -2px; }
    .none { width: 23px; flex: none; }
    .chip { height: 24px; background: #f1f1f1; display: flex; align-items: center; padding-left: 4px; flex: none; }
    .chip.bare { background: none; padding-left: 2px; }
    .chip .txt { margin-left: 17px; }
    .eyew { margin-right: 11px; }
    .eyew.d { margin-right: 7px; }
    .inner { height: 20px; display: flex; align-items: center; padding-left: 4px; color: #fff; font-weight: bold; font-size: 13.600px; }
    .inner.mid { background: #929292; }
    .inner.deep { background: #7f7f7f; }
    .inner .txt { margin-left: 12.500px; }
    .inner.mid .txt { margin-left: 17px; }
    .bare .inner .txt { margin-left: 16px; }
    .radio { margin: 0 9px 0 4px; }
    .pencil { margin: 0 0 0 22px; }
    .nav { position: absolute; left: 831px; top: 843px; }
    .dialog { position: absolute; left: 770px; top: 294px; width: 381px; height: 143px; background: #efefef; border: 1px solid #fff; border-top: none; box-shadow: 0 5px 18px rgba(0,0,0,.42); display: flex; flex-direction: column; }
    .dt { height: 38px; background: #fff; display: flex; align-items: center; padding: 0 14px 1px 10px; font: 15px "Open Sans", sans-serif; color: #000; flex: none; }
    .dt .name { margin: 0 auto 1px 5px; }
    .msg { display: flex; align-items: center; padding: 13px 0 0 18px; color: #111; font: bold 12.800px "DejaVu Sans Condensed", "DejaVu Sans", sans-serif; }
    .msg .name { margin: 0 0 0 12px; }
    .ok { width: 91px; height: 27px; margin: 7px 15px 0 auto; border: 2.500px solid #0078d7; background: #e1e1e1; display: flex; align-items: center; justify-content: center; font: 13px "Open Sans", sans-serif; color: #222; }
    .cmd { height: 31px; border-top: 1.500px solid #b4b4b4; border-left: 1px solid #c4c4c4; flex: none; display: flex; flex-direction: column; font: 14px Roboto, sans-serif; color: #666; }
    .cmd .line { display: flex; align-items: center; height: 28px; padding-left: 6px; gap: 12px; }
    .under { display: flex; height: 2px; }
    .under .in { margin-left: 60px; width: 430px; background: #fff; border-top: 1px solid #b8b8b8; }
    .under .sel { margin-left: 372px; width: 61px; background: #fff; }
  `;

  row(r: Row) {
    const start = 50 + 22.6 * r.lv - 23;
    const text = fit(r.text, r.w, "txt");
    const chip = r.dark
      ? html`<div class="chip ${r.bare ? "bare" : ""}">
          ${r.eye ? html`<span class="eyew d">${T[r.eye]}</span>` : nothing}
          <div class="inner ${r.dark}" style="padding-right:${r.pad}px">${T[r.icon]}${text}</div>
          ${r.radio ? radio : nothing}</div>`
      : html`<div class="chip" style="padding-right:${r.pad ?? 12.5}px">
          ${r.eye ? html`<span class="eyew">${T[r.eye]}</span>` : nothing}${T[r.icon]}${text}${r.pencil ? pencil : nothing}</div>`;
    return html`<div class="row" style="padding-left:${start}px">
      ${r.t === "open" ? openT : r.t === "closed" ? closedT : html`<span class="none"></span>`}${chip}</div>`;
  }

  group(g: Group) {
    return html`<div class="group" style="width:${g.x1 - g.x0}px">
      <div class="icons" style="padding-left:${g.ix - g.x0}px;gap:${g.gap}px">${g.icons}</div>
      <div class="label" style="padding-left:${g.lx - g.x0}px">${fit(g.label, g.lw)}${tri()}</div>
    </div>`;
  }

  render() {
    return html`
      <div class="title">${logo}<span class="name">${fit("Autodesk Fusion 360 (Education License)", 267)}</span>
        ${S(1755, 0, 165, 28, svg`<path d="M1765 13.500H1777M1823.500 11.500H1832.500V20.500H1823.500ZM1826 11V8.500H1835V18H1833" fill="none" stroke="#777"/><path d="M1882.500 8.500L1894 20M1894 8.500L1882.500 20" stroke="#777" stroke-width="1.100"/>`)}
      </div>
      <div class="tabs">
        <div class="quick">${S(0, 29, 241, 40, svg`
          <path d="M11 40h5v5h-5zM17.600 40h5v5h-5zM24.200 40h5v5h-5zM11 46.600h5v5h-5zM17.600 46.600h5v5h-5zM24.200 46.600h5v5h-5zM11 53.200h5v5h-5zM17.600 53.200h5v5h-5zM24.200 53.200h5v5h-5z" fill="#606060"/>
          <path d="M52 39.500H63V45.500H69V59H52ZM64.500 39.500L69 44H64.500Z" fill="#606060"/>
          <path d="M77 46H85L81 51.500ZM175.500 46H183.500L179.500 51.500Z" fill="#606060"/>
          <path d="M109 40.500H124.500L126.500 42.500V58H109Z" fill="#606060"/><path d="M112.500 41V48H122.500V41" fill="none" stroke="#cbcbcb" stroke-width="1.300"/><rect x="118" y="41" width="2" height="4.500" fill="#cbcbcb"/><path d="M113 58V52H122.500V58" fill="none" stroke="#cbcbcb" stroke-width="1.500"/><rect x="115" y="54" width="3" height="4" fill="#cbcbcb"/>
          <path d="M158 42.500L151.500 47.500L158 52.500M152 47.500H157Q165 48 165 56.500" fill="none" stroke="#606060" stroke-width="2.500"/>
          <path d="M208 42.500L214.500 47.500L208 52.500M214 47.500H209Q201 48 201 56.500" fill="none" stroke="#989898" stroke-width="2.500"/>
          <path d="M224 46H232L228 51.500Z" fill="#989898"/>`)}</div>
        <div class="tab">
          ${S(842, 41, 21, 21, svg`<path d="M842.500 43.500L852 41.500L862.500 43.500V55L852.500 61L842.500 54.500Z" fill="#5f5f5f"/><path d="M843.500 45L851.800 47.500V59L843.500 54Z" fill="#b4b4b4"/>`)}
          <span class="name">${fit("GE Bracket pc v1*", 120.5)}</span>
          <svg class="x" width="12" height="12" viewBox="0 0 12 12"><path d="M1 .500L11 10.500M11 .500L1 10.500" stroke="#707070" stroke-width="1.800"/></svg>
        </div>
        <div class="tools"><svg width="312" height="40" viewBox="1608 29 312 40">
          <path d="M1612 69V37Q1612 34 1615 34H1644.500Q1647.500 34 1647.500 37V69Z" fill="#bbb"/>
          <path d="M1622.500 51H1639M1630.700 42.500V59.500" stroke="#6a6a6a" stroke-width="3"/>
          <path d="M1662.500 40.500H1683V55H1680V59.500L1675 55H1662.500Z" fill="#5a5a5a"/><path d="M1665 44.500H1680.500M1665 47.800H1680.500M1665 51H1675" stroke="#cbcbcb" stroke-width="1.400"/>
          <rect x="1693.500" y="29" width="41.500" height="40" fill="#009fe8"/>
          <path d="M1708 42A9 9 0 0 0 1708 56A9 9 0 0 0 1722.500 47M1713 40A9 9 0 0 1 1718 41" fill="none" stroke="#fff" stroke-width="2"/>
          <path d="M1707.500 41.500Q1710 44 1712.500 42.500Q1715 42 1717 44L1719.500 47Q1720 51 1716.500 53Q1713 54 1711.500 52.500L1708 56.500L1705.500 54Q1709.500 51 1709 48.500Q1708.500 45 1707.500 41.500Z" fill="#fff"/>
          <path d="M1715.500 45L1719 41.500M1718.500 48L1722 44.500" stroke="#fff" stroke-width="1.600"/>
          <circle cx="1755" cy="49" r="9.500" fill="none" stroke="#5a5a5a" stroke-width="1.400"/><circle cx="1755" cy="49" r="7.400" fill="#5a5a5a"/><path d="M1755 44V50H1760" fill="none" stroke="#cbcbcb" stroke-width="1.700"/>
          <path d="M1796 39.500Q1797.500 39.500 1797.500 41Q1801 42.500 1801 47.500Q1801 53 1804 54.500V55.500H1788V54.500Q1791 53 1791 47.500Q1791 42.500 1794.500 41Q1794.500 39.500 1796 39.500ZM1793.500 56.500H1798.500Q1798 58.800 1796 58.800T1793.500 56.500Z" fill="#5a5a5a"/>
          <circle cx="1837.500" cy="49" r="10" fill="#5a5a5a"/><text x="1837.500" y="55" text-anchor="middle" fill="#e4e4e4" font-family="Liberation Sans" font-weight="bold" font-size="16.500">?</text>
          <circle cx="1888.700" cy="49" r="15.500" fill="#ececec"/><text x="1886.500" y="54" text-anchor="middle" fill="#505a66" font-family="Roboto" font-size="13.500" textLength="16">AD</text>
        </svg></div>
      </div>
      <div class="ribbon">
        <div class="ws"><div class="txt">${fit("GENERATIVE", 81)}${fit("DESIGN", 47)}</div>${tri()}</div>
        <div class="panel">
          <div class="define">${fit("DEFINE", 43)}</div>
          <div class="groups">${groups.map((g) => this.group(g))}</div>
        </div>
      </div>
      <div class="view">
        ${scene}
        <div class="side">
          <div class="bar top">
            <svg width="13" height="8" viewBox="0 0 13 8"><path d="M6.300 0V8L0 4ZM12.800 0V8L6.500 4Z" fill="#333"/></svg>
            <span class="name">${fit("BROWSER", 65)}</span><span class="end">${circ(false)}${bars}</span>
          </div>
          <div class="tree">${rows.map((r) => this.row(r))}</div>
          <div class="bar foot">${fit("COMMENTS", 71)}<span class="end">${circ(true)}${bars}</span></div>
        </div>
        <div class="nav">${S(831, 1014, 257, 30, svg`
          <rect x="831" y="1014" width="257" height="30" fill="#f0f0f0"/>
          <g fill="none" stroke="#4a4e58" stroke-width="1.200">
            <ellipse cx="844" cy="1028.500" rx="4" ry="10"/><path d="M848 1024.500Q854 1026 854.500 1029Q853 1032 847 1033M840 1033Q835 1032 834.500 1028.500Q835 1026 839.500 1025M846 1022L850 1019M837.500 1030.500L840 1033L837.500 1035.500"/>
            <path d="M844 1025.500V1031.500M841 1028.500H847" stroke="#2a8ae0" stroke-width="1.800"/>
            <path d="M877 1027H895V1038.500H877ZM880.500 1031H891.500V1035.500H880.500Z" fill="#e4e6ea"/><path d="M877 1027L881 1024M891 1021V1026M879 1025L886 1020V1023L892 1019.500V1024H895V1027"/>
            <path d="M916 1038Q912 1034 909.500 1029Q911 1027 914.500 1031L913 1022Q914.500 1020 915.800 1022L917 1028V1020Q918.500 1018 919.800 1020L920 1028L922 1021Q923.500 1019.500 924.500 1021.500L923.500 1029L926 1024Q927.500 1023 928 1025L926 1034L924 1038Z" fill="#fafafa"/>
            <circle cx="947" cy="1027" r="5.800" fill="#dcebf0"/><path d="M951.500 1031.500L957.500 1037.500" stroke-width="3.200"/><path d="M955 1023H961M958 1019.500V1026M955.500 1028.500H961"/>
            <rect x="974.500" y="1020" width="19" height="18.500" stroke-dasharray="3 2"/><circle cx="982.500" cy="1027" r="7.500" fill="#dfeeee"/><path d="M988 1032.500L993 1037.500" stroke-width="3.200"/>
            <rect x="1015.500" y="1019.500" width="19" height="15" rx="1" fill="#e4e4e4"/><rect x="1018" y="1022" width="14" height="10" fill="#9dbbe2" stroke="#567"/><path d="M1021 1035V1038H1029V1035Z" fill="#ccc"/>
            <rect x="1054.500" y="1019.500" width="19" height="18.500" fill="#f4f4f4"/><path d="M1055 1031H1073.500V1038H1055Z" fill="#a8b0c4" stroke="none"/><path d="M1058.500 1019.500V1038M1062.300 1019.500V1038M1066.100 1019.500V1038M1069.900 1019.500V1038M1054.500 1023.300H1073.500M1054.500 1027H1073.500M1054.500 1030.700H1073.500M1054.500 1034.400H1073.500" stroke-width=".8"/>
          </g>
          <path d="M861 1026H868.500L864.700 1031.500ZM1000 1026H1007.500L1003.700 1031.500ZM1038 1026H1045.500L1041.700 1031.500ZM1076.500 1026H1084L1080.200 1031.500Z" fill="#333"/>`)}</div>
        <div class="dialog">
          <div class="dt">${logo}<span class="name">${fit("Ready to Generate", 123)}</span>
            <svg width="13" height="13" viewBox="0 0 13 13"><path d="M.500 .500L12.500 12.500M12.500 .500L.500 12.500" stroke="#111" stroke-width="1.200"/></svg></div>
          <div class="msg">${S(789, 516, 32, 42, clip(789.5, 516.8))}<span class="name">${fit("The study setup has all the information required.", 303)}</span></div>
          <div class="ok">${fit("OK", 18)}</div>
        </div>
      </div>
      <div class="cmd">
        <div class="line">${circ(true)}${fit("TEXT COMMANDS", 110)}</div>
        <div class="under"><span class="in"></span><span class="sel"></span></div>
      </div>`;
  }
}
